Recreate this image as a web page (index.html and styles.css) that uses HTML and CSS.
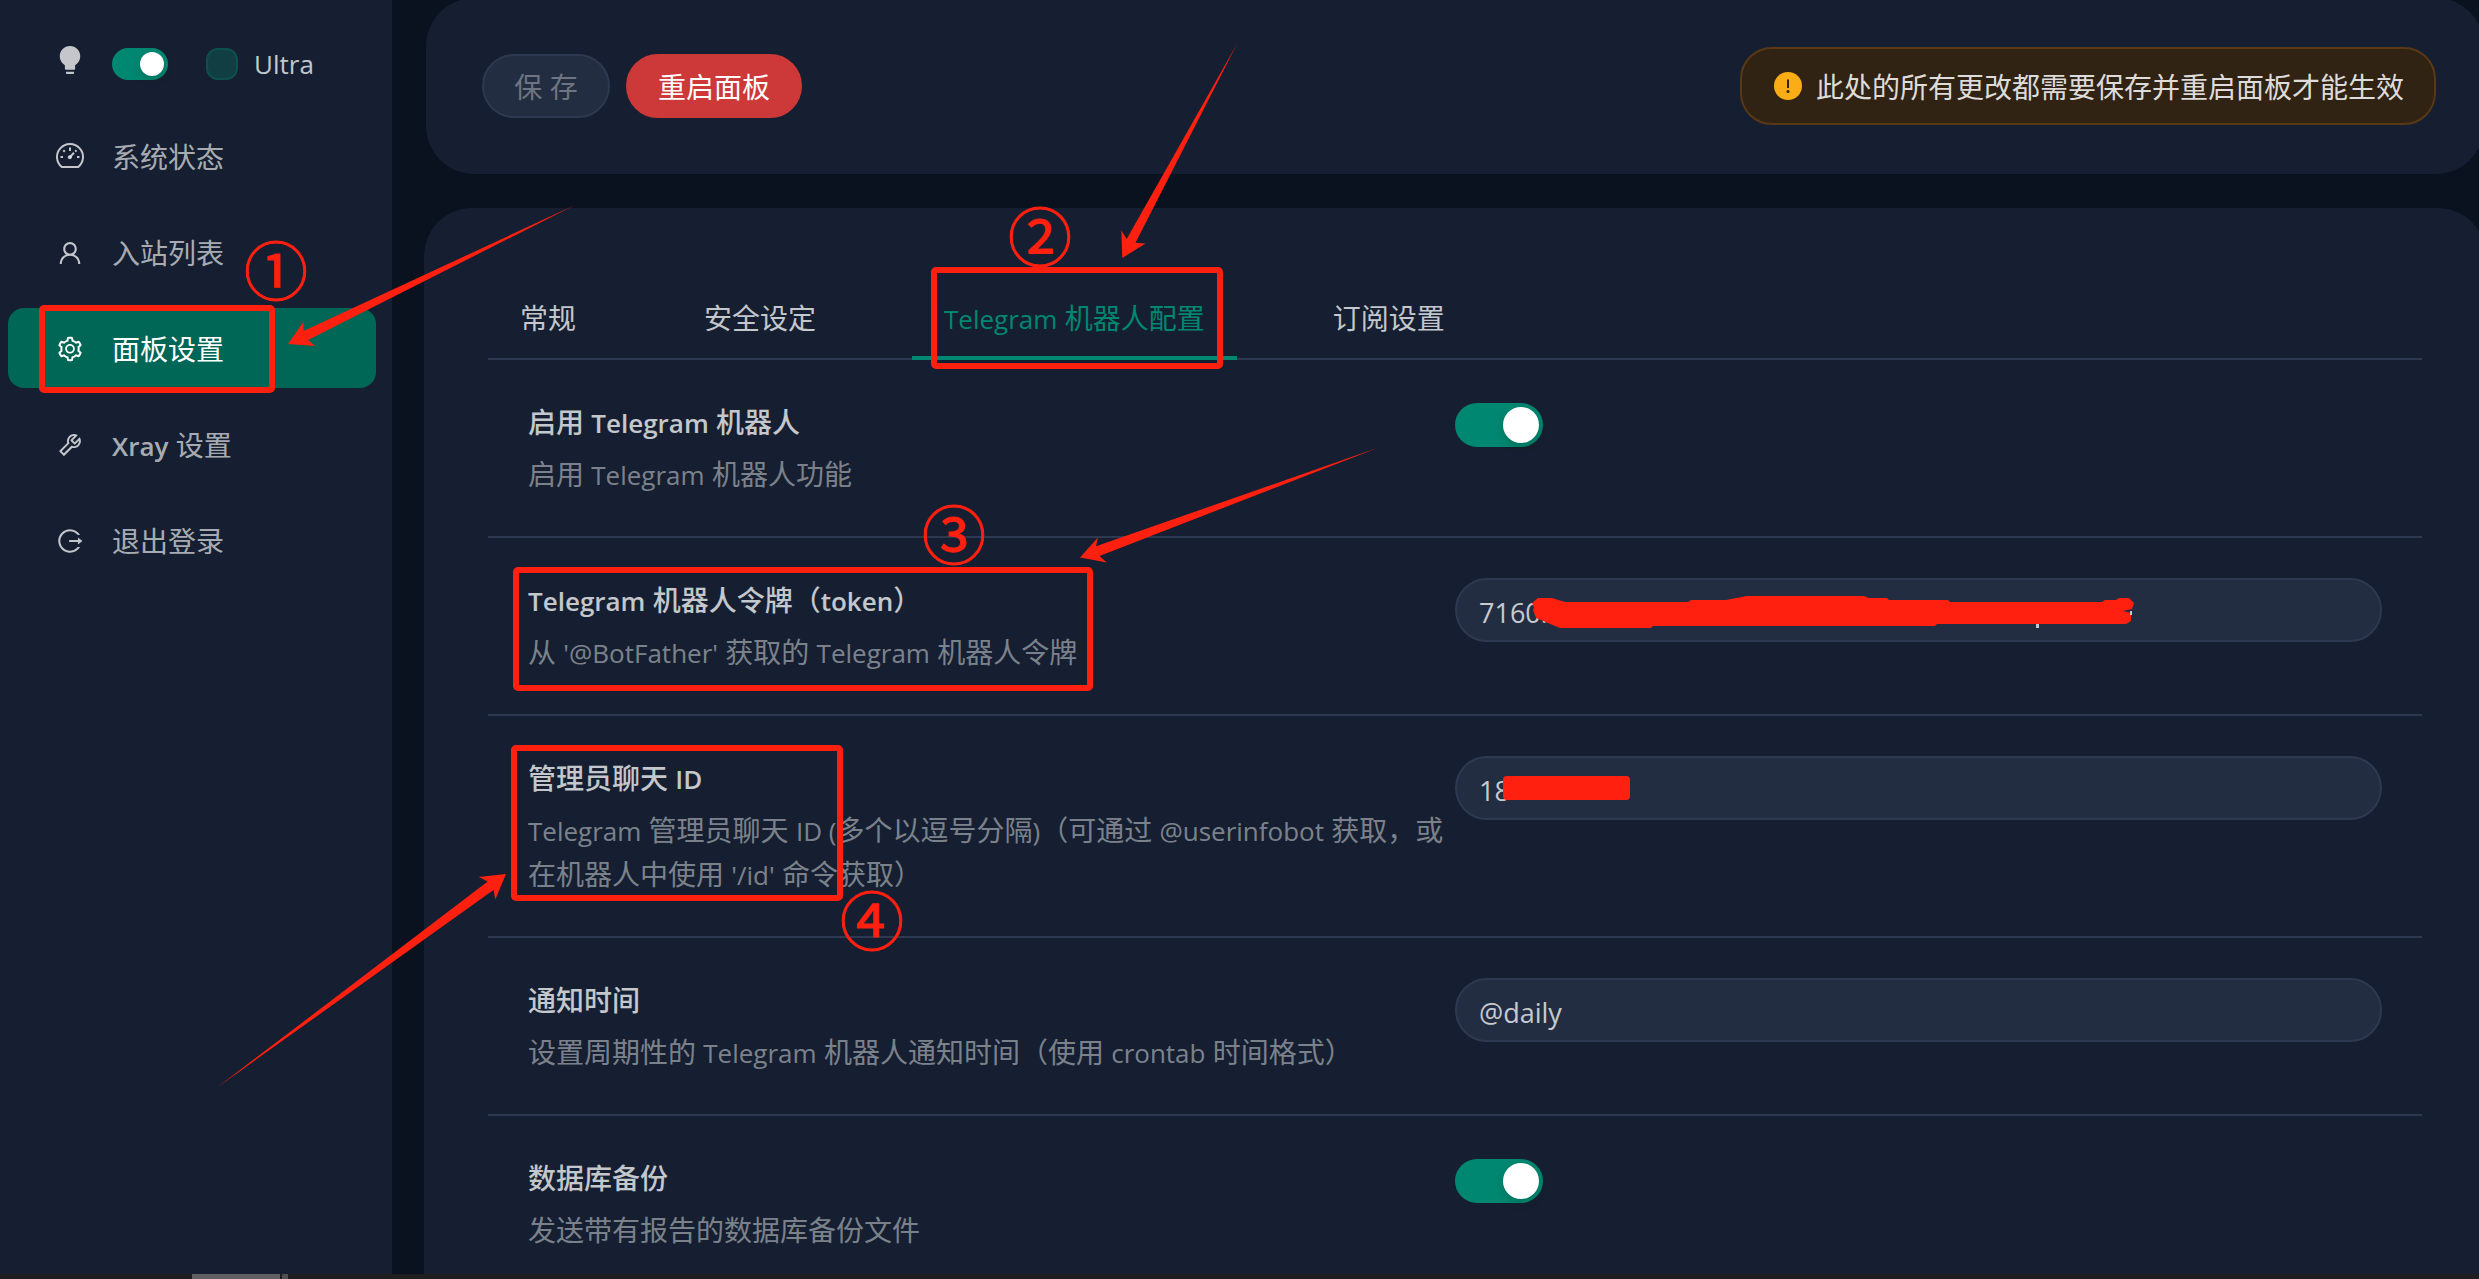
FILE: index.html
```html
<!DOCTYPE html>
<html lang="zh-CN">
<head>
<meta charset="utf-8">
<meta name="viewport" content="width=device-width, initial-scale=1">
<title>面板设置</title>
<link rel="stylesheet" href="styles.css">
</head>
<body>
<div class="app">
  <aside class="sidebar">
    <div class="theme-row">
      <svg class="bulb" viewBox="0 0 1024 1024" aria-hidden="true"><path d="M348 676.1C250 619.4 184 513.4 184 392c0-181.1 146.9-328 328-328s328 146.900 328 328c0 121.400-66 227.400-164 284.100V792c0 17.700-14.300 32-32 32H380c-17.700 0-32-14.300-32-32V676.100zM392 888h240c4.400 0 8 3.600 8 8v32c0 17.700-14.300 32-32 32H416c-17.700 0-32-14.300-32-32v-32c0-4.400 3.600-8 8-8z"/></svg>
      <input class="switch switch-small" type="checkbox" checked aria-label="深色主题">
      <label class="ultra"><input class="tick" type="checkbox"><span class="en">Ultra</span></label>
    </div>
    <nav class="menu">
      <a class="menu-item" href="#status">
        <svg viewBox="0 0 28 28" aria-hidden="true"><path class="line" d="M5.700 24A13 13 0 1 1 22.300 24Z"/><path class="line" d="M14 4.500V8M4.500 14H7M21 14h2.500M7.300 7.300l1.500 1.500M14 14l4-4.200M19.200 8.600l1.300-1.300"/><circle cx="13.800" cy="14.300" r="2"/></svg>
        系统状态</a>
      <a class="menu-item" href="#inbounds">
        <svg viewBox="0 0 1024 1024" aria-hidden="true"><path d="M858.5 763.6a374 374 0 0 0-80.6-119.5 375.63 375.63 0 0 0-119.5-80.6c-.4-.2-.8-.3-1.2-.5C719.5 518 760 444.7 760 362c0-137-111-248-248-248S264 225 264 362c0 82.7 40.5 156 102.8 201.1-.4.2-.8.3-1.2.5-44.8 18.9-85 46-119.5 80.6a375.63 375.63 0 0 0-80.6 119.5A371.7 371.7 0 0 0 136 901.8a8 8 0 0 0 8 8.2h60c4.400 0 7.900-3.500 8-7.800 2-77.200 33-149.500 87.800-204.300 56.700-56.700 132-87.900 212.200-87.900s155.500 31.200 212.200 87.900C779 752.700 810 825 812 902.200c.1 4.400 3.600 7.800 8 7.800h60a8 8 0 0 0 8-8.200c-1-47.800-10.900-94.300-29.500-138.200zM512 534c-45.900 0-89.100-17.900-121.600-50.400S340 407.900 340 362c0-45.900 17.900-89.100 50.400-121.600S466.100 190 512 190s89.100 17.900 121.600 50.400S684 316.100 684 362c0 45.900-17.900 89.100-50.400 121.600S557.900 534 512 534z"/></svg>
        入站列表</a>
      <a class="menu-item active" href="#settings" aria-current="page">
        <svg viewBox="0 0 1024 1024" aria-hidden="true"><path d="M924.8 625.7l-65.5-56c3.100-19 4.700-38.400 4.700-57.800s-1.600-38.800-4.700-57.800l65.500-56a32.030 32.030 0 0 0 9.300-35.200l-.9-2.600a443.740 443.740 0 0 0-79.700-137.900l-1.800-2.100a32.120 32.120 0 0 0-35.100-9.500l-81.300 28.900c-30-24.600-63.500-44-99.700-57.600l-15.700-85a32.050 32.050 0 0 0-25.800-25.700l-2.700-.5c-52.100-9.400-106.900-9.400-159 0l-2.700.5a32.050 32.050 0 0 0-25.800 25.700l-15.800 85.400a351.860 351.860 0 0 0-99 57.400l-81.900-29.100a32 32 0 0 0-35.100 9.500l-1.800 2.100a446.020 446.020 0 0 0-79.700 137.900l-.9 2.600c-4.500 12.500-.8 26.500 9.300 35.200l66.300 56.600c-3.100 18.800-4.600 38-4.600 57.100 0 19.200 1.500 38.400 4.600 57.100L99 625.500a32.030 32.030 0 0 0-9.300 35.200l.9 2.600c18.100 50.400 44.900 96.900 79.700 137.900l1.800 2.100a32.120 32.120 0 0 0 35.100 9.500l81.900-29.100c29.800 24.500 63.100 43.900 99 57.400l15.800 85.400a32.050 32.050 0 0 0 25.800 25.700l2.700.5a449.400 449.400 0 0 0 159 0l2.700-.5a32.050 32.050 0 0 0 25.800-25.700l15.700-85a350 350 0 0 0 99.700-57.600l81.300 28.900a32 32 0 0 0 35.100-9.500l1.800-2.100c34.800-41.100 61.600-87.500 79.700-137.900l.9-2.600c4.500-12.300.8-26.300-9.300-35zM788.300 465.900c2.500 15.100 3.800 30.600 3.800 46.100s-1.300 31-3.800 46.100l-6.600 40.100 74.700 63.900a370.030 370.030 0 0 1-42.600 73.600L721 702.800l-31.400 25.800c-23.900 19.600-50.500 35-79.300 45.800l-38.100 14.300-17.900 97a377.500 377.500 0 0 1-85 0l-17.900-97.200-37.800-14.500c-28.500-10.800-55-26.200-78.700-45.700l-31.400-25.900-93.400 33.200c-17-22.900-31.200-47.600-42.600-73.600l75.500-64.500-6.500-40c-2.400-14.900-3.700-30.300-3.700-45.500 0-15.300 1.200-30.600 3.700-45.500l6.500-40-75.500-64.500c11.300-26.100 25.600-50.700 42.600-73.600l93.400 33.200 31.400-25.900c23.700-19.500 50.200-34.900 78.700-45.700l37.900-14.300 17.900-97.200c28.100-3.200 56.800-3.200 85 0l17.900 97 38.100 14.300c28.700 10.800 55.400 26.200 79.300 45.800l31.400 25.800 92.800-32.900c17 22.900 31.200 47.600 42.600 73.600L781.800 426l6.500 39.900zM512 326c-97.200 0-176 78.800-176 176s78.800 176 176 176 176-78.800 176-176-78.800-176-176-176zm79.200 255.200A111.600 111.600 0 0 1 512 614c-29.900 0-58-11.700-79.200-32.800A111.600 111.600 0 0 1 400 502c0-29.900 11.700-58 32.800-79.200C454 401.600 482.100 390 512 390c29.900 0 58 11.600 79.200 32.800A111.600 111.600 0 0 1 624 502c0 29.900-11.700 58-32.800 79.200z"/></svg>
        面板设置</a>
      <a class="menu-item" href="#xray">
        <svg viewBox="0 0 1024 1024" aria-hidden="true"><path d="M876.600 239.500c-.5-.9-1.200-1.800-2-2.500-5-5-13.100-5-18.100 0L684.200 409.300l-67.900-67.900L788.700 169c.8-.8 1.400-1.600 2-2.500 3.600-6.100 1.600-13.900-4.500-17.500-98.200-58-226.800-44.700-311.300 39.700-67 67-89.200 162-66.500 247.400l-293 293c-3 3-2.800 7.900.3 11l169.700 169.700c3.100 3.100 8.100 3.300 11 .3l292.900-292.900c85.500 22.800 180.500.7 247.600-66.400 84.400-84.500 97.700-213.100 39.700-311.300zM786 499.800c-58.100 58.100-145.300 69.300-214.600 33.600l-8.800 8.800-.1-.1-274 274.100-79.200-79.200 230.100-230.100s0 .1.1.1l52.800-52.800c-35.700-69.300-24.500-156.500 33.600-214.600a184.200 184.200 0 0 1 144-53.500L537 318.900a32.050 32.050 0 0 0 0 45.300l124.500 124.500a32.050 32.050 0 0 0 45.300 0l132.800-132.800c3.700 51.800-14.400 104.800-53.600 143.900z"/></svg>
        <span><span class="en strong">Xray</span> 设置</span></a>
      <a class="menu-item" href="#logout">
        <svg viewBox="0 0 1024 1024" aria-hidden="true"><path d="M868 732h-70.300c-4.800 0-9.300 2.100-12.300 5.800-7 8.500-14.500 16.700-22.400 24.500a353.840 353.840 0 0 1-112.700 75.900A352.800 352.800 0 0 1 512.400 866c-47.900 0-94.300-9.400-137.900-27.800a353.840 353.840 0 0 1-112.700-75.900 353.280 353.280 0 0 1-76-112.500C167.300 606.200 158 559.900 158 512s9.400-94.200 27.800-137.800c17.800-42.100 43.400-80 76-112.500s70.500-58.100 112.700-75.900c43.600-18.400 90-27.800 137.900-27.800 47.900 0 94.300 9.300 137.900 27.800 42.200 17.800 80.100 43.400 112.700 75.900 7.900 7.900 15.300 16.100 22.400 24.500 3 3.700 7.600 5.800 12.300 5.800H868c6.300 0 10.200-7 6.700-12.300C798 160.500 663.800 81.600 511.300 82 271.700 82.600 79.600 277.100 82 516.400 84.400 751.900 276.200 942 512.400 942c152.100 0 285.700-78.800 362.300-197.700 3.400-5.300-.4-12.300-6.700-12.300zm88.900-226.300L815 393.700c-5.300-4.200-13-.4-13 6.300v76H488c-4.400 0-8 3.600-8 8v56c0 4.400 3.600 8 8 8h314v76c0 6.700 7.800 10.500 13 6.300l141.900-112a8 8 0 0 0 0-12.600z"/></svg>
        退出登录</a>
    </nav>
  </aside>

  <main class="content">
    <section class="card toolbar">
      <div class="buttons">
        <button class="btn btn-save" type="button" disabled>保 存</button>
        <button class="btn btn-danger" type="button">重启面板</button>
      </div>
      <div class="alert" role="alert">
        <svg viewBox="0 0 28 28" aria-hidden="true"><circle cx="14" cy="14" r="14"/><path d="M14 7.500v8.500" /><circle class="dot" cx="14" cy="19.500" r="1.500"/></svg>
        <span>此处的所有更改都需要保存并重启面板才能生效</span>
      </div>
    </section>

    <section class="card settings">
      <div class="tabs" role="tablist">
        <button class="tab" type="button" role="tab">常规</button>
        <button class="tab" type="button" role="tab">安全设定</button>
        <button class="tab selected" type="button" role="tab" aria-selected="true"><span class="en">Telegram</span> 机器人配置</button>
        <button class="tab" type="button" role="tab">订阅设置</button>
      </div>

      <div class="row">
        <div class="meta">
          <label class="title" for="enable">启用 <span class="en">Telegram</span> 机器人</label>
          <p class="desc">启用 <span class="en">Telegram</span> 机器人功能</p>
        </div>
        <div class="control switch-box"><input class="switch" id="enable" type="checkbox" checked></div>
      </div>

      <div class="row">
        <div class="meta">
          <label class="title" for="token"><span class="en">Telegram</span> 机器人令牌（<span class="en">token</span>）</label>
          <p class="desc">从 <span class="en">'@BotFather'</span> 获取的 <span class="en">Telegram</span> 机器人令牌</p>
        </div>
        <div class="control"><input class="text-input" id="token" type="text" value="7160:"></div>
      </div>

      <div class="row">
        <div class="meta">
          <label class="title" for="chat">管理员聊天 <span class="en">ID</span></label>
          <p class="desc"><span class="en">Telegram</span> 管理员聊天 <span class="en">ID (</span>多个以逗号分隔<span class="en">)</span>（可通过 <span class="en">@userinfobot</span> 获取，或在机器人中使用 <span class="en">'/id'</span> 命令获取）</p>
        </div>
        <div class="control"><input class="text-input" id="chat" type="text" value="18"></div>
      </div>

      <div class="row">
        <div class="meta">
          <label class="title" for="cron">通知时间</label>
          <p class="desc">设置周期性的 <span class="en">Telegram</span> 机器人通知时间（使用 <span class="en">crontab</span> 时间格式）</p>
        </div>
        <div class="control"><input class="text-input" id="cron" type="text" value="@daily"></div>
      </div>

      <div class="row">
        <div class="meta">
          <label class="title" for="backup">数据库备份</label>
          <p class="desc">发送带有报告的数据库备份文件</p>
        </div>
        <div class="control switch-box"><input class="switch" id="backup" type="checkbox" checked></div>
      </div>
    </section>
  </main>
</div>

<div class="taskbar"><span class="task"></span><span class="task-more"></span></div>

<svg class="marks" width="2479" height="1279" viewBox="0 0 2479 1279">
  <g class="boxes">
    <rect x="42" y="308" width="230" height="82" rx="2"/>
    <rect x="934" y="270" width="286" height="96" rx="2"/>
    <rect x="516" y="570" width="574" height="118" rx="2"/>
    <rect x="514" y="748" width="326" height="150" rx="2"/>
  </g>
  <g class="solid">
    <path d="M288 344l15.500-22.300v9.300L575 205 308 340l7.300 6z"/>
    <path d="M1122.300 258l-1-27.500 5.400 8.500L1237.500 43 1135.500 242.700l10 .8z"/>
    <path d="M1080 557.500l18-20-2 8.800L1380 447 1099.500 556l7.300 6.500z"/>
    <path d="M506 874l-27.300 3 9 4.500L217 1087.500 493.500 890l1.800 9.500z"/>
    <path d="M1532 603l6-5h14l13 4h123l3-2h35l21-4h117l5 2h18l2 2h59l2 2h152l3-2h11l3-2h10l5 5-2 6-9 2 8 2v8l-5 3H1937l-2 2H1653l-2 2h-91l-12-5-12-5-3-8 1-3z"/>
    <rect x="1503" y="776" width="127" height="24" rx="4"/>
  </g>
  <path class="stub" d="M2036 624h3v4h-3zM2130 611h2v4h-2z"/>
  <g class="nums">
    <text x="276" y="295">①</text>
    <text x="1040" y="261">②</text>
    <text x="954" y="559">③</text>
    <text x="872" y="945">④</text>
  </g>
</svg>
</body>
</html>
```
FILE: styles.css
```css
* { box-sizing: border-box; }

body {
  margin: 0;
  height: 100vh;
  display: flex;
  flex-direction: column;
  overflow: hidden;
  background: #0a111f;
  color: rgba(255, 255, 255, 0.75);
  font-family: "Open Sans", "Noto Sans CJK SC", sans-serif;
  font-size: 28px;
  line-height: 44px;
}

button, input { font: inherit; color: inherit; margin: 0; }

.en { font-size: 26px; line-height: 1; }
.strong { font-weight: 600; }

.app {
  flex: 1;
  min-height: 0;
  display: flex;
  overflow: hidden;
}

/* Sidebar */
.sidebar {
  flex: none;
  width: 392px;
  padding-top: 16px;
  background: #151f31;
}

.theme-row {
  display: flex;
  align-items: center;
  height: 96px;
  padding-left: 54px;
}

.bulb {
  width: 32px;
  height: 32px;
  margin: 0 26px 8px 0;
  fill: currentColor;
}

.ultra {
  display: flex;
  align-items: center;
  gap: 16px;
  margin-left: 38px;
}

.tick {
  appearance: none;
  width: 32px;
  height: 32px;
  border: 2px solid #0d504c;
  border-radius: 12px;
  background: #113e43;
}

.menu { margin-top: -4px; }

.menu-item {
  display: flex;
  align-items: center;
  gap: 28px;
  height: 80px;
  margin: 0 16px 16px 8px;
  padding: 2px 0 0 48px;
  border-radius: 16px;
  color: rgba(255, 255, 255, 0.65);
  text-decoration: none;
}

.menu-item:first-child { margin-top: 8px; }

.menu-item svg {
  width: 28px;
  height: 28px;
  fill: currentColor;
  color: rgba(255, 255, 255, 0.75);
}

.menu-item .line {
  fill: none;
  stroke: currentColor;
  stroke-width: 2;
}

.menu-item.active {
  background: #006655;
  color: #fff;
}

.menu-item.active svg { color: #fff; }

/* Content */
.content {
  flex: 1;
  min-width: 0;
  margin: -2px -7px 0 0;
  padding-left: 32px;
}

.card {
  background: #151f31;
  border-radius: 48px;
}

.toolbar {
  display: flex;
  align-items: center;
  justify-content: space-between;
  margin: 0 2px 34px;
  padding: 49px 48px 49px 56px;
}

.buttons { display: flex; gap: 16px; }

.btn {
  min-width: 128px;
  height: 64px;
  padding: 2px 30px 0;
  border: 2px solid;
  border-radius: 32px;
}

.btn-save {
  background: #222d42;
  border-color: #2c3950;
  color: rgba(255, 255, 255, 0.35);
}

.btn-danger {
  background: #cd3838;
  border-color: #cd3838;
  color: #fff;
}

.alert {
  display: flex;
  align-items: center;
  gap: 14px;
  height: 78px;
  padding: 0 30px 0 32px;
  border: 2px solid #593815;
  border-radius: 32px;
  background: #312313;
  color: rgba(255, 255, 255, 0.85);
}

.alert span { padding-top: 2px; }
.alert svg { width: 28px; height: 28px; fill: #faad14; }
.alert path { stroke: #312313; stroke-width: 2; }
.alert .dot { fill: #312313; }

.settings { padding: 48px 64px; }

.tabs {
  display: flex;
  gap: 64px;
  height: 104px;
  border-bottom: 2px solid #2c3950;
}

.tab {
  height: 104px;
  padding: 24px 32px 0;
  border: 0;
  border-bottom: 4px solid transparent;
  background: none;
}

.tab.selected {
  border-bottom-color: #008771;
  color: #008771;
}

.row {
  display: grid;
  grid-template-columns: 1fr 1fr;
  padding: 40px;
  border-bottom: 2px solid #2c3950;
}

.title { display: block; font-weight: 500; }
.title .en { font-weight: 600; }

.desc {
  margin: 8px 0 0;
  color: rgba(255, 255, 255, 0.45);
}

.text-input {
  display: block;
  width: 100%;
  height: 64px;
  padding: 4px 22px 0;
  border: 2px solid #2c3950;
  border-radius: 32px;
  background: #222d42;
  font-size: 27px;
}

.switch-box { padding-top: 3px; }

.switch {
  appearance: none;
  display: flex;
  justify-content: flex-end;
  width: 88px;
  height: 44px;
  padding: 4px;
  border-radius: 22px;
  background: #008771;
}

.switch::before {
  content: "";
  width: 36px;
  height: 36px;
  border-radius: 50%;
  background: #fff;
  box-shadow: 0 4px 8px rgba(0, 35, 11, 0.2);
}

.switch-small { width: 56px; height: 32px; }
.switch-small::before { width: 24px; height: 24px; }

/* System strip under the window */
.taskbar {
  flex: none;
  display: flex;
  gap: 2px;
  height: 5px;
  padding-left: 192px;
  background: #1f1d1d;
}

.task { width: 88px; background: #625f60; }
.task-more { width: 6px; background: #504e4e; }

/* Tutorial marks drawn over the page */
.marks {
  position: absolute;
  top: 0;
  left: 0;
  pointer-events: none;
}

.boxes { fill: none; stroke: #ff2010; stroke-width: 6; }
.solid { fill: #ff2010; }
.stub { fill: #c4c8ce; }

.nums {
  fill: #ff2010;
  stroke: #ff2010;
  stroke-width: 1;
  font-family: "Noto Sans CJK SC", sans-serif;
  font-size: 64px;
  text-anchor: middle;
}
```
